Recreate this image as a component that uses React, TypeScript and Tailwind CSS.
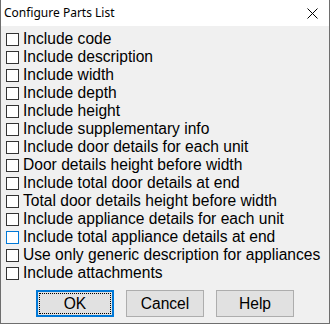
import React from "react";

const items = [
  "Include code",
  "Include description",
  "Include width",
  "Include depth",
  "Include height",
  "Include supplementary info",
  "Include door details for each unit",
  "Door details height before width",
  "Include total door details at end",
  "Total door details height before width",
  "Include appliance details for each unit",
  "Include total appliance details at end",
  "Use only generic description for appliances",
  "Include attachments",
];

export default function App() {
  return (
    <div
      className="w-[330px] h-[324px] flex flex-col bg-[#f0f0f0] border-x border-b border-[#6e6e6e] text-black"
      style={{ fontFamily: '"Liberation Sans", Arial, sans-serif' }}
    >
      <div className="h-[26px] bg-white flex items-center justify-between pl-[3px] pr-[10px]">
        <span
          className="text-[12px] leading-none text-black"
          style={{ fontFamily: '"Noto Sans", "Open Sans", sans-serif' }}
        >
          Configure Parts List
        </span>
        <svg width="11" height="11" viewBox="0 0 11 11" className="mr-[1px]">
          <path d="M0.5 0.5 L10.5 10.5 M10.5 0.5 L0.5 10.5" stroke="#000" strokeWidth="1" fill="none" />
        </svg>
      </div>
      <div className="flex flex-col pl-[5px] pt-[4px]">
        {items.map((t, i) => (
          <div key={t} className="h-[18px] flex items-start gap-[4px]">
            <div
              className={
                "mt-[3px] w-[13px] h-[13px] shrink-0 bg-white border " +
                (i === 11 ? "border-[#0078d7]" : "border-[#333333]")
              }
            />
            <span className="text-[15.6px] leading-[18px] whitespace-nowrap">{t}</span>
          </div>
        ))}
      </div>
      <div className="flex pl-[35px] gap-[12px] mt-[8px]">
        <button className="w-[78px] h-[27px] border-2 border-[#0078d7] bg-[#e1e1e1] p-[1px] flex">
          <span className="flex-1 border border-dotted border-black flex items-center justify-center text-[15.6px] leading-none">
            OK
          </span>
        </button>
        <button className="w-[78px] h-[27px] border border-[#adadad] bg-[#e1e1e1] flex items-center justify-center text-[15.6px] leading-none">
          Cancel
        </button>
        <button className="w-[78px] h-[27px] border border-[#adadad] bg-[#e1e1e1] flex items-center justify-center text-[15.6px] leading-none">
          Help
        </button>
      </div>
    </div>
  );
}
